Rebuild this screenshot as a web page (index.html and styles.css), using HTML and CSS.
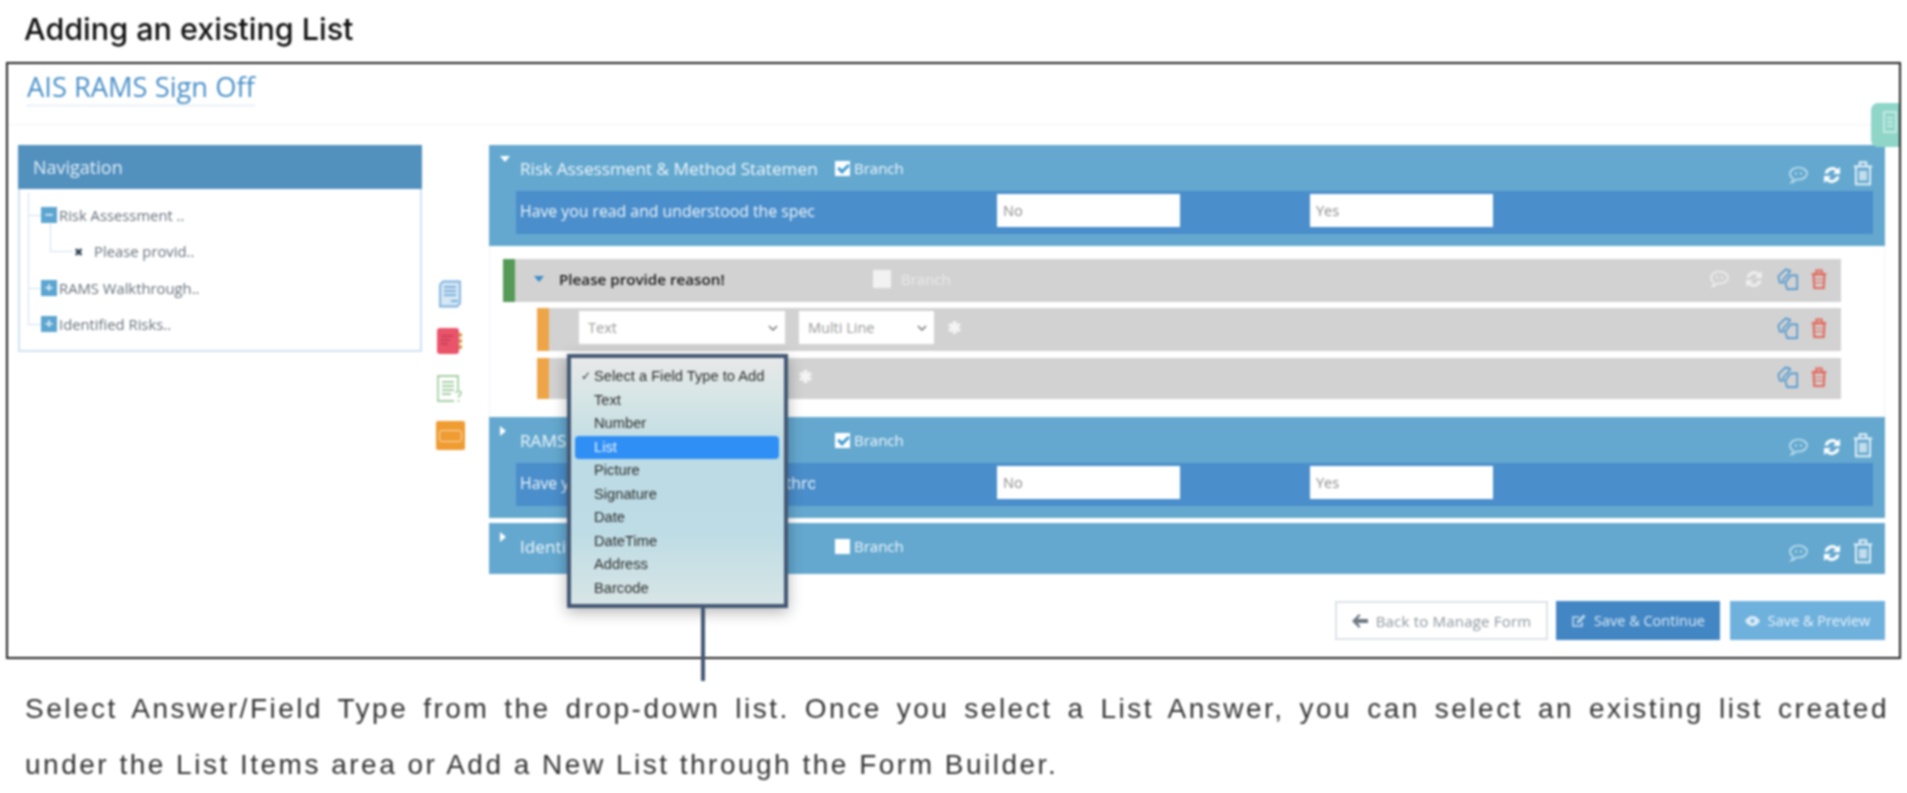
FILE: index.html
```html
<!DOCTYPE html>
<html lang="en">
<head>
  <meta charset="UTF-8">
  <title>Adding an existing List</title>
  <link rel="stylesheet" href="styles.css">
</head>
<body>
  <svg class="defs" width="0" height="0">
    <symbol id="i-comment" viewBox="0 0 22 22"><path d="M11.500 3.500c4.700 0 8.500 2.700 8.500 6s-3.800 6-8.500 6c-.8 0-1.600-.1-2.300-.2-1 1.600-2.500 2.700-4.700 3.200 1-1 1.500-2.200 1.400-4.100C4 13.300 3 11.500 3 9.500c0-3.300 3.800-6 8.500-6z" fill="none" stroke="currentColor" stroke-width="1.600"/><path d="M8 9.500h2M13 9.500h2" stroke="currentColor" stroke-width="1.800"/></symbol>
    <symbol id="i-refresh" viewBox="0 0 20 20"><path d="M2.500 8.500A7.800 7.800 0 0 1 15.600 4.300L18 2v7h-7l2.500-2.600a4.700 4.700 0 0 0-7.700 2.100zM17.500 11.500A7.800 7.800 0 0 1 4.400 15.700L2 18v-7h7l-2.500 2.600a4.700 4.700 0 0 0 7.700-2.100z" fill="currentColor"/></symbol>
    <symbol id="i-trash" viewBox="0 0 20 24"><path d="M1.500 6h17M7 5.500V2h6v3.500M3.500 6.500v15.800h13V6.500M7.500 10v9M10 10v9M12.500 10v9" fill="none" stroke="currentColor" stroke-width="1.800"/></symbol>
    <symbol id="i-bin" viewBox="0 0 20 24"><path d="M2 6.500h16M7 5.500V2.500h6v3" fill="none" stroke="currentColor" stroke-width="2.200"/><path d="M4 7h12l-.8 15H4.800z" fill="none" stroke="currentColor" stroke-width="2.400"/><path d="M6 12h8M6 16h8" stroke="currentColor" stroke-width="1.800" opacity=".7"/></symbol>
    <symbol id="i-copy" viewBox="0 0 24 24"><path d="M3 16L1.500 9 9.500 1.500l5 1.500-2.500 4-5 5-.5 4z" fill="none" stroke="currentColor" stroke-width="1.800" stroke-linejoin="round"/><path d="M9 16l6-8h7v15H11z" fill="none" stroke="currentColor" stroke-width="1.800" stroke-linejoin="round"/></symbol>
    <symbol id="i-chevron" viewBox="0 0 10 6"><path d="M1 1l4 4 4-4" fill="none" stroke="currentColor" stroke-width="1.500"/></symbol>
    <symbol id="i-star" viewBox="0 0 14 14"><path d="M7 1v12M1.800 4l10.400 6M12.200 4L1.800 10" stroke="currentColor" stroke-width="3.400"/></symbol>
  </svg>

  <div class="page">
    <h1 class="page-title">Adding an existing List</h1>

    <div class="frame">
      <div class="form-title"><span>AIS RAMS Sign Off</span></div>
      <div class="side-tab">
        <svg width="14" height="24" viewBox="0 0 14 24"><path d="M1 2h12v20H1zM4 8h6M4 12h6M4 16h6" fill="none" stroke="#d6f0ea" stroke-width="1.500"/></svg>
      </div>

      <div class="builder">
        <div class="nav">
          <div class="nav-head">Navigation</div>
          <ul class="tree">
            <li><span class="node">&minus;</span>Risk Assessment ..</li>
            <li class="child"><span class="node-x">&#10006;</span>Please provid..</li>
            <li><span class="node">+</span>RAMS Walkthrough..</li>
            <li><span class="node">+</span>Identified Risks..</li>
          </ul>
        </div>

        <div class="tools">
          <svg class="tool" width="24" height="28" viewBox="0 0 24 28"><path d="M5 1.500h17v22l-3 3H2V4.500z" fill="#d5e6f4" stroke="#7db1dc" stroke-width="1.800"/><path d="M6 7h12M6 11h12M6 15h12M13 21h7" stroke="#7db1dc" stroke-width="1.800"/></svg>
          <svg class="tool" width="28" height="28" viewBox="0 0 28 28"><rect x="1" y="1" width="22" height="26" rx="3" fill="#e9546b"/><path d="M5 9h12M5 13h9M5 17h7" stroke="#c43d52" stroke-width="1.500"/><path d="M23 6h3v4h-3zM23 12h3v4h-3zM23 18h3v4h-3z" fill="#d2a24a"/></svg>
          <svg class="tool" width="28" height="30" viewBox="0 0 28 30"><path d="M18 27H2V2h20v14" fill="none" stroke="#a5cfa5" stroke-width="1.800"/><path d="M6 8h12M6 12h12M6 16h12M6 20h9" stroke="#a5cfa5" stroke-width="1.800"/><path d="M20 19c0-2.500 5-2.500 5 0 0 2-2.500 2-2.500 4.500M22.500 26v2" fill="none" stroke="#a5cfa5" stroke-width="1.800"/></svg>
          <div class="tool-field"><span></span></div>
        </div>

        <div class="sections">
          <section class="section">
            <div class="section-head">
              <span class="caret-down"></span>
              <span class="section-name">Risk Assessment &amp; Method Statement</span>
              <label class="branch"><span class="check is-on"></span>Branch</label>
              <div class="actions">
                <svg class="ic-comment"><use href="#i-comment"/></svg>
                <svg class="ic-refresh"><use href="#i-refresh"/></svg>
                <svg class="ic-trash"><use href="#i-trash"/></svg>
              </div>
            </div>
            <div class="answer-row">
              <span class="answer-text">Have you read and understood the specific RAMS</span>
              <div class="answer-input">No</div>
              <div class="answer-input">Yes</div>
            </div>
          </section>

          <div class="questions">
            <div class="row row-question">
              <span class="bar bar-green"></span>
              <span class="caret-blue"></span>
              <span class="question-name">Please provide reason!</span>
              <label class="branch branch-light"><span class="check"></span>Branch</label>
              <div class="actions">
                <svg class="ic-comment ic-faint"><use href="#i-comment"/></svg>
                <svg class="ic-refresh ic-faint"><use href="#i-refresh"/></svg>
                <svg class="ic-copy"><use href="#i-copy"/></svg>
                <svg class="ic-bin"><use href="#i-bin"/></svg>
              </div>
            </div>
            <div class="row row-field">
              <span class="bar bar-orange"></span>
              <div class="select select-type">Text<svg><use href="#i-chevron"/></svg></div>
              <div class="select select-sub">Multi Line<svg><use href="#i-chevron"/></svg></div>
              <svg class="star"><use href="#i-star"/></svg>
              <div class="actions">
                <svg class="ic-copy"><use href="#i-copy"/></svg>
                <svg class="ic-bin"><use href="#i-bin"/></svg>
              </div>
            </div>
            <div class="row row-field row-last">
              <span class="bar bar-orange"></span>
              <div class="select select-type"></div>
              <svg class="star"><use href="#i-star"/></svg>
              <div class="actions">
                <svg class="ic-copy"><use href="#i-copy"/></svg>
                <svg class="ic-bin"><use href="#i-bin"/></svg>
              </div>
            </div>
          </div>

          <section class="section">
            <div class="section-head">
              <span class="caret-right"></span>
              <span class="section-name">RAMS Walkthrough Authorisation</span>
              <label class="branch"><span class="check is-on"></span>Branch</label>
              <div class="actions">
                <svg class="ic-comment"><use href="#i-comment"/></svg>
                <svg class="ic-refresh"><use href="#i-refresh"/></svg>
                <svg class="ic-trash"><use href="#i-trash"/></svg>
              </div>
            </div>
            <div class="answer-row">
              <span class="answer-text">Have you completed the RAMS Walkthrough</span>
              <div class="answer-input">No</div>
              <div class="answer-input">Yes</div>
            </div>
          </section>

          <section class="section section-closed">
            <div class="section-head">
              <span class="caret-right"></span>
              <span class="section-name">Identified Risks</span>
              <label class="branch"><span class="check"></span>Branch</label>
              <div class="actions">
                <svg class="ic-comment"><use href="#i-comment"/></svg>
                <svg class="ic-refresh"><use href="#i-refresh"/></svg>
                <svg class="ic-trash"><use href="#i-trash"/></svg>
              </div>
            </div>
          </section>

          <div class="buttons">
            <a class="btn btn-back">
              <svg width="16" height="14" viewBox="0 0 16 14"><path d="M7 0l1.500 1.500L5.500 5H16v4H5.500l3 3.500L7 14 0 7z" fill="#6d7880"/></svg>
              Back to Manage Form
            </a>
            <a class="btn btn-save">
              <svg width="15" height="14" viewBox="0 0 15 14"><path d="M11 8v4H2V3h6" fill="none" stroke="#c4dcef" stroke-width="1.500"/><path d="M5.500 9.500l.7-2.600L12.500.5l2 2-6.300 6.300z" fill="#c4dcef"/></svg>
              Save &amp; Continue
            </a>
            <a class="btn btn-preview">
              <svg width="15" height="10" viewBox="0 0 15 10"><path d="M0 5c4-6.600 11-6.600 15 0-4 6.600-11 6.600-15 0z" fill="#dcedf8"/><circle cx="7.500" cy="5" r="2" fill="#6fb1dd"/></svg>
              Save &amp; Preview
            </a>
          </div>
        </div>
      </div>

      <ul class="dropdown">
        <li class="is-checked">Select a Field Type to Add</li>
        <li>Text</li>
        <li>Number</li>
        <li class="is-active">List</li>
        <li>Picture</li>
        <li>Signature</li>
        <li>Date</li>
        <li>DateTime</li>
        <li>Address</li>
        <li>Barcode</li>
      </ul>
    </div>

    <p class="caption"><span class="caption-first">Select Answer/Field Type from the drop-down list. Once you select a List Answer, you can select an existing list created</span> under the List Items area or Add a New List through the Form Builder.</p>
  </div>
</body>
</html>
```

FILE: styles.css
```css
body {
  margin: 0;
  background: #fff;
  font-family: "Open Sans", sans-serif;
  overflow: hidden;
}

.defs {
  position: absolute;
}

/* the reference is a scaled-up picture, so everything is a little soft */
.page {
  filter: blur(0.8px);
}

.page-title {
  margin: 0;
  padding: 12px 0 0 24px;
  height: 50px;
  box-sizing: border-box;
  font-family: Inter, sans-serif;
  font-size: 30.500px;
  font-weight: 500;
  line-height: 34px;
  color: #111;
}

.frame {
  position: relative;
  box-sizing: border-box;
  margin: 12px 6px 0;
  height: 597px;
  border: 2px solid #222;
}

.form-title {
  height: 61px;
  padding: 7px 0 0 19px;
  box-sizing: border-box;
  border-bottom: 1px solid #f4f4f4;
  font-size: 27.300px;
  line-height: 32px;
  color: #4a90c8;
}

.form-title span {
  border-bottom: 1px dotted #b5cfe4;
}

.side-tab {
  position: absolute;
  top: 39px;
  right: 0;
  width: 28px;
  height: 44px;
  padding: 7px 0 0 12px;
  box-sizing: border-box;
  background: #8fd6c9;
  border-radius: 7px 0 0 7px;
}

.builder {
  display: flex;
  margin-top: 20px;
  padding-left: 10px;
}

/* navigation */
.nav {
  width: 404px;
  height: 207px;
  box-sizing: border-box;
  border: 2px solid #cfe2f2;
  border-top: 0;
}

.nav-head {
  margin: 0 -2px;
  height: 44px;
  padding-left: 15px;
  background: #5290be;
  color: #e3eef6;
  font-size: 18px;
  line-height: 44px;
}

.tree {
  position: relative;
  list-style: none;
  margin: 0;
  padding: 8px 0 0 21px;
  color: #66707a;
  font-size: 14.800px;
}

/* trunk of the tree, from the header down to the last node */
.tree::before {
  content: "";
  position: absolute;
  left: 8px;
  top: 4px;
  height: 131px;
  border-left: 1px solid #cfe2f2;
}

.tree li {
  position: relative;
  display: flex;
  align-items: center;
  height: 36.300px;
}

.tree li::before {
  content: "";
  position: absolute;
  left: -13px;
  top: 18px;
  width: 13px;
  border-bottom: 1px solid #cfe2f2;
}

.tree li.child::before {
  left: 9px;
  top: -9px;
  width: 22px;
  height: 27px;
  border-left: 1px solid #cfe2f2;
}

.tree li.child {
  padding-left: 33px;
}

.node {
  width: 16px;
  height: 16px;
  margin-right: 2px;
  background: #5ba5d0;
  color: #dff0f8;
  font-size: 15px;
  font-weight: 700;
  line-height: 15px;
  text-align: center;
}

.node-x {
  width: 20px;
  color: #2c3e50;
  font-size: 11px;
}

/* tool column */
.tools {
  width: 67px;
  display: flex;
  flex-direction: column;
  align-items: center;
  padding: 135px 11px 0 0;
  box-sizing: border-box;
}

.tool {
  margin-bottom: 19px;
}

.tool-field {
  width: 29px;
  height: 29px;
  margin-top: -2px;
  padding: 9px 3px;
  box-sizing: border-box;
  background: #ef9c33;
  border-radius: 2px;
}

.tool-field span {
  display: block;
  height: 10px;
  border: 1px solid #fbdcae;
  border-radius: 3px;
}

/* sections */
.sections {
  width: 1396px;
}

.section {
  padding-bottom: 12px;
  background: #64a8cf;
  color: #f1f7fb;
}

.section-closed {
  margin-top: 5px;
  padding-bottom: 5px;
}

.section-head {
  display: flex;
  align-items: center;
  height: 46px;
  padding: 0 11px;
}

.caret-down,
.caret-right {
  width: 20px;
  margin-top: -18px;
}

.caret-down::before {
  content: "";
  display: block;
  width: 0;
  border: 5px solid transparent;
  border-top: 6px solid #fff;
  border-bottom: 0;
}

.caret-right::before {
  content: "";
  display: block;
  width: 0;
  border: 5px solid transparent;
  border-left: 6px solid #fff;
  border-right: 0;
}

.section-name {
  width: 297px;
  margin-right: 18px;
  overflow: hidden;
  white-space: nowrap;
  font-size: 17.200px;
  font-weight: 500;
}

.branch {
  display: flex;
  align-items: center;
  font-size: 15px;
  font-weight: 500;
}

.check {
  position: relative;
  width: 15px;
  height: 15px;
  margin-right: 4px;
  background: #fff;
}

.check.is-on::after {
  content: "";
  position: absolute;
  left: 5px;
  top: 1px;
  width: 4px;
  height: 8px;
  border: solid #3f9bd0;
  border-width: 0 3px 3px 0;
  transform: rotate(45deg);
}

.actions {
  display: flex;
  align-items: center;
  margin-left: auto;
}

.section .actions {
  padding-top: 13px;
}

.ic-comment {
  width: 22px;
  height: 22px;
  margin-right: 13px;
  color: #bfe0ee;
}

.ic-refresh {
  width: 20px;
  height: 20px;
  margin-right: 10px;
  color: #fff;
}

.ic-trash {
  width: 22px;
  height: 26px;
  margin-top: -4px;
  color: #e4f1f7;
}

.ic-faint {
  color: #eeeeee;
}

.ic-copy {
  width: 22px;
  height: 24px;
  margin-right: 11px;
  color: #4e97cf;
}

.ic-bin {
  width: 18px;
  height: 22px;
  color: #e2695c;
}

.answer-row {
  display: flex;
  margin: 0 12px 0 27px;
  height: 43px;
  background: #4a8ecb;
  color: #f1f7fb;
  font-size: 15.800px;
  font-weight: 500;
}

/* the long question is cut off well before the inputs */
.answer-text {
  width: 295px;
  margin: 0 182px 0 4px;
  overflow: hidden;
  white-space: nowrap;
  line-height: 40px;
}

.answer-input {
  width: 183px;
  height: 33px;
  margin: 3px 130px 0 0;
  padding-left: 6px;
  box-sizing: border-box;
  background: #fff;
  color: #8a8a8a;
  font-size: 14.500px;
  font-weight: 400;
  line-height: 33px;
}

/* questions under the open section */
.questions {
  padding: 13px 43px 18px 13px;
  border: solid #eef3f8;
  border-width: 0 1px;
}

.row {
  display: flex;
  align-items: center;
  box-sizing: border-box;
  height: 43px;
  padding-bottom: 4px;
  background: #d2d2d2;
}

.bar {
  align-self: stretch;
  width: 12px;
  margin-bottom: -4px;
}

.bar-green {
  background: #559b57;
}

.bar-orange {
  background: #eea548;
}

.caret-blue {
  width: 0;
  margin: 0 15px 0 19px;
  border: 5px solid transparent;
  border-top: 6px solid #3a8bc8;
  border-bottom: 0;
}

.question-name {
  width: 314px;
  color: #1c1c1c;
  font-size: 15.200px;
  font-weight: 600;
}

.branch-light {
  color: #eaeaea;
}

.branch-light .check {
  width: 18px;
  height: 18px;
  margin-right: 10px;
  background: #f2f2f2;
}

.row .actions {
  padding-right: 13px;
}

.row .ic-comment {
  margin-right: 14px;
}

.row .ic-refresh {
  margin-right: 13px;
}

.row-field {
  margin: 6px 0 0 34px;
}

.row-last {
  height: 41px;
  margin-top: 7px;
}

.select {
  display: flex;
  align-items: center;
  justify-content: space-between;
  height: 33px;
  padding: 0 7px 0 9px;
  box-sizing: border-box;
  background: #fff;
  color: #9a9a9a;
  font-size: 14.500px;
}

.select svg {
  width: 10px;
  height: 6px;
  color: #777;
}

.select-type {
  width: 206px;
  margin-left: 30px;
}

.select-sub {
  width: 135px;
  margin-left: 14px;
}

.star {
  width: 15px;
  height: 15px;
  margin-left: 13px;
  color: #f4f4f4;
}

/* buttons */
.buttons {
  display: flex;
  justify-content: flex-end;
  gap: 8px;
  margin-top: 27px;
}

.btn {
  display: flex;
  align-items: center;
  justify-content: center;
  gap: 8px;
  height: 39px;
  box-sizing: border-box;
  font-size: 14.500px;
  font-weight: 500;
}

.btn-back {
  width: 213px;
  background: #fff;
  border: 2px solid #dde3e8;
  color: #8d979f;
  font-size: 15px;
  letter-spacing: 0.2px;
}

.btn-save {
  width: 164px;
  background: #4286c4;
  color: #dcebf6;
}

.btn-preview {
  width: 155px;
  margin-left: 2px;
  background: #6fb1dd;
  color: #e9f4fb;
}

/* native looking popup drawn over the form */
.dropdown {
  position: absolute;
  left: 559px;
  top: 290px;
  width: 221px;
  height: 254px;
  box-sizing: border-box;
  list-style: none;
  margin: 0;
  padding: 7px 0 0 4px;
  border: 4px solid #445874;
  background: linear-gradient(#e8e8e9 0%, #d9e6e6 14%, #bcdbe4 40%, #bddce5 70%, #d8e5e5 100%);
  box-shadow: 0 4px 14px rgba(0, 0, 0, 0.3);
  font-family: "Liberation Sans", sans-serif;
  font-size: 14.700px;
  color: #2c2c2c;
}

.dropdown li {
  height: 23.500px;
  margin-right: 5px;
  padding-left: 19px;
  border-radius: 4px;
  line-height: 23.500px;
}

.dropdown .is-active {
  background: #2f8ff5;
  color: #e8f3ff;
}

.dropdown .is-checked {
  position: relative;
}

.dropdown .is-checked::before {
  content: "\2713";
  position: absolute;
  left: 6px;
  font-family: "DejaVu Sans", sans-serif;
  font-size: 12px;
}

.dropdown::after {
  content: "";
  position: absolute;
  left: 130px;
  top: 250px;
  width: 4px;
  height: 73px;
  background: #445874;
}

.caption {
  margin: 22px 18px 0 25px;
  font-family: "Liberation Sans", sans-serif;
  font-size: 28px;
  line-height: 56px;
  letter-spacing: 2.500px;
  color: #333;
}

/* first line runs the full width, as in the justified original */
.caption-first {
  display: block;
  text-align: justify;
  text-align-last: justify;
}
```
